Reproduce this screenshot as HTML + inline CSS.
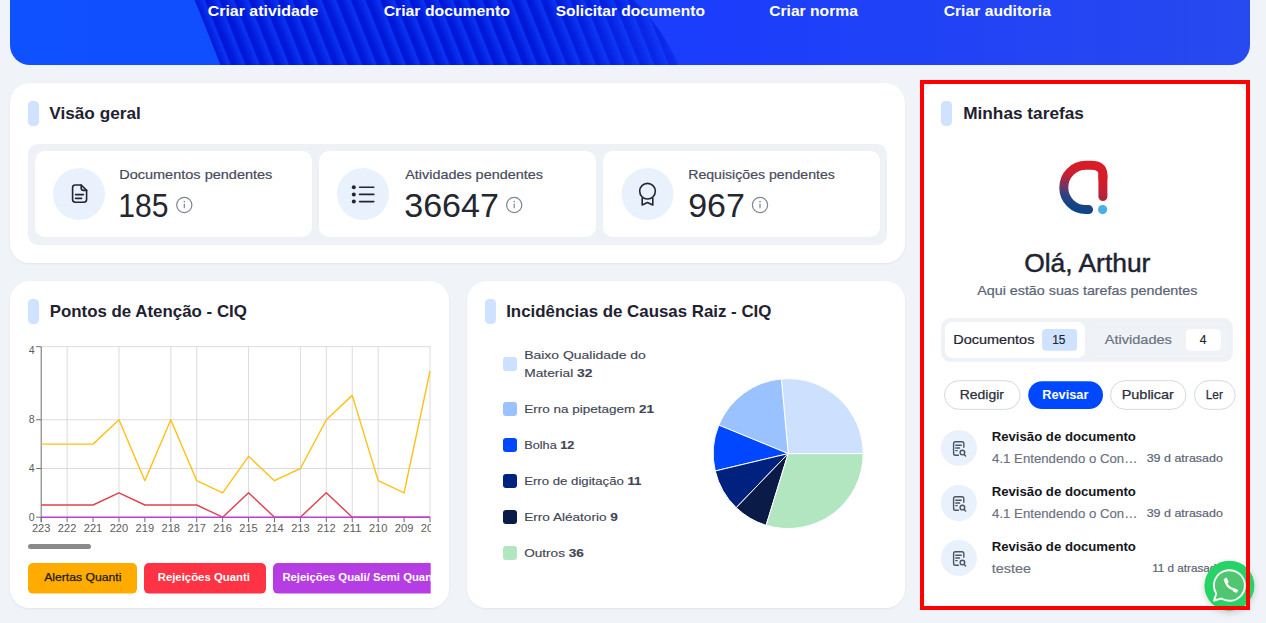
<!DOCTYPE html><html><head><meta charset="utf-8"><style>html,body{margin:0;padding:0;background:#f0f3f7;overflow:hidden}svg{display:block;font-family:"Liberation Sans",sans-serif}</style></head><body><svg width="1266" height="623" viewBox="0 0 1266 623"><defs><linearGradient id="banG" x1="10" y1="0" x2="1250" y2="0" gradientUnits="userSpaceOnUse"><stop offset="0" stop-color="#0f50ff"/><stop offset="0.15" stop-color="#0f4ffe"/><stop offset="0.55" stop-color="#1b3dfc"/><stop offset="0.8" stop-color="#2244f4"/><stop offset="1" stop-color="#2749f0"/></linearGradient><clipPath id="banClip"><rect x="10" y="-40" width="1240" height="105" rx="20"/></clipPath><clipPath id="stripeClip"><path d="M194,-2 L221,66 L679,66 C668,40 650,15 632,-2 Z"/></clipPath><pattern id="stripes" patternUnits="userSpaceOnUse" width="14.6" height="200" patternTransform="skewX(21.8)"><rect x="0" y="0" width="14.6" height="200" fill="url(#stripeG)"/></pattern><linearGradient id="stripeG" x1="0" y1="0" x2="1" y2="0"><stop offset="0" stop-color="#0a33f2"/><stop offset="0.06" stop-color="#0016d4"/><stop offset="0.35" stop-color="#0019d8"/><stop offset="1" stop-color="#0b36f4"/></linearGradient><linearGradient id="fadeG" x1="150" y1="0" x2="690" y2="0" gradientUnits="userSpaceOnUse"><stop offset="0" stop-color="#fff"/><stop offset="0.7" stop-color="#fff"/><stop offset="1" stop-color="#777"/></linearGradient><mask id="fadeM" maskUnits="userSpaceOnUse" x="0" y="-40" width="1266" height="110"><rect x="0" y="-40" width="1266" height="110" fill="url(#fadeG)"/></mask><clipPath id="bt3clip"><rect x="273" y="560" width="157.7" height="40"/></clipPath><clipPath id="chartClip"><rect x="20" y="330" width="411" height="215"/></clipPath><linearGradient id="logoG" x1="1085" y1="165" x2="1075" y2="208" gradientUnits="userSpaceOnUse"><stop offset="0" stop-color="#d81c28"/><stop offset="0.28" stop-color="#c92031"/><stop offset="0.45" stop-color="#9c2a4a"/><stop offset="0.6" stop-color="#6a3768"/><stop offset="0.76" stop-color="#2e4280"/><stop offset="1" stop-color="#0e4488"/></linearGradient><linearGradient id="logoR" x1="0" y1="174" x2="0" y2="201" gradientUnits="userSpaceOnUse"><stop offset="0" stop-color="#d81c28"/><stop offset="0.55" stop-color="#c82033"/><stop offset="1" stop-color="#a4283f"/></linearGradient><filter id="sh" x="-10%" y="-10%" width="120%" height="120%"><feDropShadow dx="0" dy="1" stdDeviation="1.2" flood-color="#000" flood-opacity="0.06"/></filter><filter id="wsh" x="-50%" y="-50%" width="200%" height="200%"><feDropShadow dx="0" dy="2" stdDeviation="3" flood-color="#000" flood-opacity="0.18"/></filter></defs><rect x="0" y="0" width="1266" height="623" fill="#f0f3f7"/><g clip-path="url(#banClip)"><rect x="0" y="-40" width="1266" height="105" fill="url(#banG)"/><g clip-path="url(#stripeClip)"><rect x="150" y="-5" width="600" height="75" fill="url(#stripes)" mask="url(#fadeM)"/></g></g><rect x="10" y="83" width="895" height="180" rx="20" fill="#fff" filter="url(#sh)"/><rect x="10" y="281" width="439" height="327" rx="20" fill="#fff" filter="url(#sh)"/><rect x="467" y="281" width="438" height="327" rx="20" fill="#fff" filter="url(#sh)"/><rect x="922" y="82" width="326" height="526" rx="20" fill="#fff"/><rect x="28" y="101" width="11" height="25" rx="4.5" fill="#cfe2ff"/><rect x="941" y="101" width="11" height="25" rx="4.5" fill="#cfe2ff"/><rect x="28" y="299" width="11" height="25" rx="4.5" fill="#cfe2ff"/><rect x="485" y="299" width="11" height="25" rx="4.5" fill="#cfe2ff"/><rect x="28" y="144" width="859" height="101" rx="10" fill="#eef2f6"/><rect x="35" y="151" width="277" height="86" rx="10" fill="#fff"/><rect x="319" y="151" width="277" height="86" rx="10" fill="#fff"/><rect x="603" y="151" width="277" height="86" rx="10" fill="#fff"/><circle cx="79" cy="194" r="26" fill="#e9f1fd"/><circle cx="363" cy="194" r="26" fill="#e9f1fd"/><circle cx="647.5" cy="194" r="26" fill="#e9f1fd"/><g fill="none" stroke="#23262f" stroke-width="1.6" stroke-linecap="round" stroke-linejoin="round"><path d="M81.2,185 H75.2 Q72.6,185 72.6,187.6 V199.6 Q72.6,202.2 75.2,202.2 H84 Q86.6,202.2 86.6,199.6 V190.4 Z"/><path d="M81.2,185 V188 Q81.2,190.4 83.6,190.4 H86.6"/><path d="M75.6,194.6 H83.4 M75.6,198.4 H81.6"/></g><g fill="#23262f"><circle cx="353.8" cy="187.2" r="2"/><circle cx="353.8" cy="194.4" r="2"/><circle cx="353.8" cy="201.6" r="2"/></g><g stroke="#23262f" stroke-width="1.6" stroke-linecap="round"><path d="M359.6,187.2 H373.8 M359.6,194.4 H373.8 M359.6,201.6 H373.8"/></g><g fill="none" stroke="#23262f" stroke-width="1.6" stroke-linejoin="round"><circle cx="647.5" cy="191.2" r="7.8"/><path d="M642.2,197.5 V205 L647.5,202.6 L652.8,205 V197.5"/></g><g stroke="#7d8592" fill="none" stroke-width="1.2"><circle cx="184.3" cy="205" r="7.6"/></g><rect x="183.70" y="203.6" width="1.2" height="4.6" fill="#7d8592"/><circle cx="184.3" cy="201.6" r="0.8" fill="#7d8592"/><g stroke="#7d8592" fill="none" stroke-width="1.2"><circle cx="514.2" cy="205" r="7.6"/></g><rect x="513.60" y="203.6" width="1.2" height="4.6" fill="#7d8592"/><circle cx="514.2" cy="201.6" r="0.8" fill="#7d8592"/><g stroke="#7d8592" fill="none" stroke-width="1.2"><circle cx="760.0" cy="205" r="7.6"/></g><rect x="759.40" y="203.6" width="1.2" height="4.6" fill="#7d8592"/><circle cx="760.0" cy="201.6" r="0.8" fill="#7d8592"/><g stroke="#dcdcdc" stroke-width="1"><line x1="41.2" y1="346.68" x2="430.5" y2="346.68"/><line x1="41.2" y1="419.76" x2="430.5" y2="419.76"/><line x1="41.2" y1="468.48" x2="430.5" y2="468.48"/><line x1="67.12" y1="346.68" x2="67.12" y2="517.20"/><line x1="118.96" y1="346.68" x2="118.96" y2="517.20"/><line x1="170.80" y1="346.68" x2="170.80" y2="517.20"/><line x1="196.72" y1="346.68" x2="196.72" y2="517.20"/><line x1="248.56" y1="346.68" x2="248.56" y2="517.20"/><line x1="300.40" y1="346.68" x2="300.40" y2="517.20"/><line x1="326.32" y1="346.68" x2="326.32" y2="517.20"/><line x1="352.24" y1="346.68" x2="352.24" y2="517.20"/><line x1="378.16" y1="346.68" x2="378.16" y2="517.20"/><line x1="430.00" y1="346.68" x2="430.00" y2="517.20"/></g><g stroke="#6e6e6e" stroke-width="1"><line x1="41.2" y1="346.68" x2="41.2" y2="522.20"/><line x1="36.2" y1="346.68" x2="41.2" y2="346.68"/><line x1="36.2" y1="419.76" x2="41.2" y2="419.76"/><line x1="36.2" y1="468.48" x2="41.2" y2="468.48"/><line x1="36.2" y1="517.20" x2="41.2" y2="517.20"/><line x1="41.20" y1="517.2" x2="41.20" y2="522.2"/><line x1="67.12" y1="517.2" x2="67.12" y2="522.2"/><line x1="93.04" y1="517.2" x2="93.04" y2="522.2"/><line x1="118.96" y1="517.2" x2="118.96" y2="522.2"/><line x1="144.88" y1="517.2" x2="144.88" y2="522.2"/><line x1="170.80" y1="517.2" x2="170.80" y2="522.2"/><line x1="196.72" y1="517.2" x2="196.72" y2="522.2"/><line x1="222.64" y1="517.2" x2="222.64" y2="522.2"/><line x1="248.56" y1="517.2" x2="248.56" y2="522.2"/><line x1="274.48" y1="517.2" x2="274.48" y2="522.2"/><line x1="300.40" y1="517.2" x2="300.40" y2="522.2"/><line x1="326.32" y1="517.2" x2="326.32" y2="522.2"/><line x1="352.24" y1="517.2" x2="352.24" y2="522.2"/><line x1="378.16" y1="517.2" x2="378.16" y2="522.2"/><line x1="404.08" y1="517.2" x2="404.08" y2="522.2"/><line x1="430.00" y1="517.2" x2="430.00" y2="522.2"/></g><polyline points="41.20,444.12 67.12,444.12 93.04,444.12 118.96,419.76 144.88,480.66 170.80,419.76 196.72,480.66 222.64,492.84 248.56,456.30 274.48,480.66 300.40,468.48 326.32,419.76 352.24,395.40 378.16,480.66 404.08,492.84 430.00,371.04" fill="none" stroke="#fcc21b" stroke-width="1.45" stroke-linejoin="round"/><polyline points="41.20,505.02 67.12,505.02 93.04,505.02 118.96,492.84 144.88,505.02 170.80,505.02 196.72,505.02 222.64,517.20 248.56,492.84 274.48,517.20 300.40,517.20 326.32,492.84 352.24,517.20 378.16,517.20 404.08,517.20 430.00,517.20" fill="none" stroke="#e0434f" stroke-width="1.45" stroke-linejoin="round"/><polyline points="41.20,517.20 67.12,517.20 93.04,517.20 118.96,517.20 144.88,517.20 170.80,517.20 196.72,517.20 222.64,517.20 248.56,517.20 274.48,517.20 300.40,517.20 326.32,517.20 352.24,517.20 378.16,517.20 404.08,517.20 430.00,517.20" fill="none" stroke="#b83ee0" stroke-width="1.5"/><g font-family="Liberation Sans" font-size="10.6" fill="#5c5c5c"><text x="34.6" y="353.6" text-anchor="end">4</text><text x="34.6" y="423.4" text-anchor="end">8</text><text x="34.6" y="472.3" text-anchor="end">4</text><text x="34.6" y="520.8" text-anchor="end">0</text></g><g font-family="Liberation Sans" font-size="10.6" fill="#5c5c5c" clip-path="url(#chartClip)"><text x="41.20" y="531.9" text-anchor="middle" textLength="18.5" lengthAdjust="spacingAndGlyphs">223</text><text x="67.12" y="531.9" text-anchor="middle" textLength="18.5" lengthAdjust="spacingAndGlyphs">222</text><text x="93.04" y="531.9" text-anchor="middle" textLength="18.5" lengthAdjust="spacingAndGlyphs">221</text><text x="118.96" y="531.9" text-anchor="middle" textLength="18.5" lengthAdjust="spacingAndGlyphs">220</text><text x="144.88" y="531.9" text-anchor="middle" textLength="18.5" lengthAdjust="spacingAndGlyphs">219</text><text x="170.80" y="531.9" text-anchor="middle" textLength="18.5" lengthAdjust="spacingAndGlyphs">218</text><text x="196.72" y="531.9" text-anchor="middle" textLength="18.5" lengthAdjust="spacingAndGlyphs">217</text><text x="222.64" y="531.9" text-anchor="middle" textLength="18.5" lengthAdjust="spacingAndGlyphs">216</text><text x="248.56" y="531.9" text-anchor="middle" textLength="18.5" lengthAdjust="spacingAndGlyphs">215</text><text x="274.48" y="531.9" text-anchor="middle" textLength="18.5" lengthAdjust="spacingAndGlyphs">214</text><text x="300.40" y="531.9" text-anchor="middle" textLength="18.5" lengthAdjust="spacingAndGlyphs">213</text><text x="326.32" y="531.9" text-anchor="middle" textLength="18.5" lengthAdjust="spacingAndGlyphs">212</text><text x="352.24" y="531.9" text-anchor="middle" textLength="18.5" lengthAdjust="spacingAndGlyphs">211</text><text x="378.16" y="531.9" text-anchor="middle" textLength="18.5" lengthAdjust="spacingAndGlyphs">210</text><text x="404.08" y="531.9" text-anchor="middle" textLength="18.5" lengthAdjust="spacingAndGlyphs">209</text><text x="430.00" y="531.9" text-anchor="middle" textLength="18.5" lengthAdjust="spacingAndGlyphs">208</text></g><rect x="28" y="544" width="63" height="5" rx="2.5" fill="#8a8a8a"/><rect x="28" y="563" width="109" height="30.6" rx="5" fill="#ffab00"/><rect x="144" y="563" width="122" height="30.6" rx="5" fill="#ff3344"/><g clip-path="url(#bt3clip)"><rect x="273" y="563" width="200" height="30.6" rx="5" fill="#b63de3"/></g><path d="M788.2,453.6 L863.20,453.60 A75.0,75.0 0 0 0 781.39,378.91 Z" fill="#cde1ff" stroke="#fff" stroke-width="1" stroke-linejoin="round"/><path d="M788.2,453.6 L781.39,378.91 A75.0,75.0 0 0 0 718.82,425.12 Z" fill="#99c2ff" stroke="#fff" stroke-width="1" stroke-linejoin="round"/><path d="M788.2,453.6 L718.82,425.12 A75.0,75.0 0 0 0 715.24,470.97 Z" fill="#0047ff" stroke="#fff" stroke-width="1" stroke-linejoin="round"/><path d="M788.2,453.6 L715.24,470.97 A75.0,75.0 0 0 0 736.21,507.66 Z" fill="#00227f" stroke="#fff" stroke-width="1" stroke-linejoin="round"/><path d="M788.2,453.6 L736.21,507.66 A75.0,75.0 0 0 0 766.14,525.28 Z" fill="#0a1b48" stroke="#fff" stroke-width="1" stroke-linejoin="round"/><path d="M788.2,453.6 L766.14,525.28 A75.0,75.0 0 0 0 863.20,453.60 Z" fill="#b2e6c1" stroke="#fff" stroke-width="1" stroke-linejoin="round"/><rect x="503" y="357" width="14" height="14" rx="3" fill="#cde1ff"/><rect x="503" y="402" width="14" height="14" rx="3" fill="#99c2ff"/><rect x="503" y="438" width="14" height="14" rx="3" fill="#0047ff"/><rect x="503" y="474" width="14" height="14" rx="3" fill="#00227f"/><rect x="503" y="510" width="14" height="14" rx="3" fill="#0a1b48"/><rect x="503" y="546" width="14" height="14" rx="3" fill="#b2e6c1"/><path d="M1102.9,178 V174.5 Q1102.9,165.3 1091,165.3 H1086 C1073.5,165.3 1063.8,175.3 1063.8,187.5 C1063.8,199.6 1073.5,209.6 1086,209.6 H1088.6" fill="none" stroke="url(#logoG)" stroke-width="9" stroke-linecap="round"/><path d="M1102.9,196.5 V176" fill="none" stroke="url(#logoR)" stroke-width="9" stroke-linecap="round"/><circle cx="1102.6" cy="209.6" r="4.6" fill="#4aaee8"/><rect x="941.2" y="318" width="291.6" height="43.8" rx="9" fill="#eef1f5"/><rect x="945" y="321.9" width="140" height="36" rx="7" fill="#fff"/><rect x="1042.1" y="329" width="35" height="21.8" rx="4" fill="#cfe2ff"/><rect x="1091" y="323" width="136" height="35.6" rx="7" fill="#e9edf2"/><rect x="1089" y="322" width="140" height="35.8" rx="7" fill="#eff2f6"/><rect x="1186" y="329.2" width="34.8" height="21.5" rx="4" fill="#fff"/><rect x="944.5" y="380.7" width="75.60" height="28.6" rx="14.3" fill="#fff" stroke="#d3dae3" stroke-width="1"/><rect x="1028.2" y="381.2" width="74.80" height="27.8" rx="13.9" fill="#0048ff"/><rect x="1110.6" y="380.7" width="75.30" height="28.6" rx="14.3" fill="#fff" stroke="#d3dae3" stroke-width="1"/><rect x="1194.5" y="380.7" width="40.70" height="28.6" rx="14.3" fill="#fff" stroke="#d3dae3" stroke-width="1"/><circle cx="958.9" cy="448" r="18" fill="#e9f1fd"/><g transform="translate(0,0)" fill="none" stroke="#4b5563" stroke-width="1.4" stroke-linecap="round" stroke-linejoin="round"><path d="M958.4,455.3 H955.4 Q953.6,455.3 953.6,453.5 V443.6 Q953.6,441.8 955.4,441.8 H962 Q963.8,441.8 963.8,443.6 V447.3"/><path d="M955.8,445.3 H961.3 M955.8,448 H959.6 M955.8,450.6 H957.2"/><circle cx="962.4" cy="452.6" r="2.3"/><path d="M964.1,454.4 L965.6,455.9"/></g><circle cx="958.9" cy="503" r="18" fill="#e9f1fd"/><g transform="translate(0,55)" fill="none" stroke="#4b5563" stroke-width="1.4" stroke-linecap="round" stroke-linejoin="round"><path d="M958.4,455.3 H955.4 Q953.6,455.3 953.6,453.5 V443.6 Q953.6,441.8 955.4,441.8 H962 Q963.8,441.8 963.8,443.6 V447.3"/><path d="M955.8,445.3 H961.3 M955.8,448 H959.6 M955.8,450.6 H957.2"/><circle cx="962.4" cy="452.6" r="2.3"/><path d="M964.1,454.4 L965.6,455.9"/></g><circle cx="958.9" cy="558" r="18" fill="#e9f1fd"/><g transform="translate(0,110)" fill="none" stroke="#4b5563" stroke-width="1.4" stroke-linecap="round" stroke-linejoin="round"><path d="M958.4,455.3 H955.4 Q953.6,455.3 953.6,453.5 V443.6 Q953.6,441.8 955.4,441.8 H962 Q963.8,441.8 963.8,443.6 V447.3"/><path d="M955.8,445.3 H961.3 M955.8,448 H959.6 M955.8,450.6 H957.2"/><circle cx="962.4" cy="452.6" r="2.3"/><path d="M964.1,454.4 L965.6,455.9"/></g><g font-family="Liberation Sans"><text id="ban0" x="207.70" y="15.90" font-size="14.6" fill="#ffffff" font-weight="bold" textLength="110.70" lengthAdjust="spacingAndGlyphs">Criar atividade</text><text id="ban1" x="383.70" y="15.90" font-size="14.6" fill="#ffffff" font-weight="bold" textLength="126.20" lengthAdjust="spacingAndGlyphs">Criar documento</text><text id="ban2" x="555.70" y="15.90" font-size="14.6" fill="#ffffff" font-weight="bold" textLength="149.20" lengthAdjust="spacingAndGlyphs">Solicitar documento</text><text id="ban3" x="769.20" y="15.90" font-size="14.6" fill="#ffffff" font-weight="bold" textLength="88.70" lengthAdjust="spacingAndGlyphs">Criar norma</text><text id="ban4" x="943.70" y="15.90" font-size="14.6" fill="#ffffff" font-weight="bold" textLength="107.20" lengthAdjust="spacingAndGlyphs">Criar auditoria</text><text id="t1" x="49.20" y="119.10" font-size="16.4" fill="#1f2230" font-weight="bold" textLength="91.70" lengthAdjust="spacingAndGlyphs">Visão geral</text><text id="t2" x="963.20" y="118.90" font-size="16.4" fill="#1f2230" font-weight="bold" textLength="120.70" lengthAdjust="spacingAndGlyphs">Minhas tarefas</text><text id="t3" x="49.70" y="317.30" font-size="16.4" fill="#1f2230" font-weight="bold" textLength="197.20" lengthAdjust="spacingAndGlyphs">Pontos de Atenção - CIQ</text><text id="t4" x="506.20" y="317.30" font-size="16.4" fill="#1f2230" font-weight="bold" textLength="265.20" lengthAdjust="spacingAndGlyphs">Incidências de Causas Raiz - CIQ</text><text id="l1" x="119.20" y="179.10" font-size="13.4" fill="#474c5a" stroke="#474c5a" stroke-width="0.2" textLength="153.20" lengthAdjust="spacingAndGlyphs">Documentos pendentes</text><text id="l2" x="405.20" y="179.10" font-size="13.4" fill="#474c5a" stroke="#474c5a" stroke-width="0.2" textLength="137.70" lengthAdjust="spacingAndGlyphs">Atividades pendentes</text><text id="l3" x="688.20" y="179.10" font-size="13.4" fill="#474c5a" stroke="#474c5a" stroke-width="0.2" textLength="146.70" lengthAdjust="spacingAndGlyphs">Requisições pendentes</text><text id="n1" x="118.20" y="217.20" font-size="34" fill="#25272f" textLength="50.20" lengthAdjust="spacingAndGlyphs">185</text><text id="n2" x="404.20" y="216.80" font-size="34" fill="#25272f" textLength="94.70" lengthAdjust="spacingAndGlyphs">36647</text><text id="n3" x="688.20" y="217.00" font-size="34" fill="#25272f" textLength="56.70" lengthAdjust="spacingAndGlyphs">967</text><text id="ola" x="1024.20" y="272.00" font-size="25.5" fill="#1e2330" stroke="#1e2330" stroke-width="0.45" textLength="126.20" lengthAdjust="spacingAndGlyphs">Olá, Arthur</text><text id="aqui" x="977.20" y="294.90" font-size="13.4" fill="#5b6475" stroke="#5b6475" stroke-width="0.22" textLength="220.20" lengthAdjust="spacingAndGlyphs">Aqui estão suas tarefas pendentes</text><text id="tab1" x="953.20" y="343.80" font-size="13.0" fill="#1f2433" stroke="#1f2433" stroke-width="0.2" textLength="81.20" lengthAdjust="spacingAndGlyphs">Documentos</text><text id="b15" x="1052.20" y="343.80" font-size="13.0" fill="#1f2433" stroke="#1f2433" stroke-width="0.2" textLength="13.20" lengthAdjust="spacingAndGlyphs">15</text><text id="tab2" x="1104.70" y="343.80" font-size="13.0" fill="#6b7280" stroke="#6b7280" stroke-width="0.2" textLength="67.20" lengthAdjust="spacingAndGlyphs">Atividades</text><text id="b4" x="1199.70" y="343.80" font-size="13.0" fill="#1f2433" stroke="#1f2433" stroke-width="0.2" textLength="6.70" lengthAdjust="spacingAndGlyphs">4</text><text id="p1" x="959.70" y="399.40" font-size="13.4" fill="#2a2f3a" stroke="#2a2f3a" stroke-width="0.25" textLength="44.20" lengthAdjust="spacingAndGlyphs">Redigir</text><text id="p2" x="1042.20" y="399.40" font-size="13.4" fill="#ffffff" font-weight="bold" textLength="46.20" lengthAdjust="spacingAndGlyphs">Revisar</text><text id="p3" x="1121.70" y="399.40" font-size="13.4" fill="#2a2f3a" stroke="#2a2f3a" stroke-width="0.25" textLength="52.20" lengthAdjust="spacingAndGlyphs">Publicar</text><text id="p4" x="1205.70" y="399.40" font-size="13.4" fill="#2a2f3a" stroke="#2a2f3a" stroke-width="0.25" textLength="17.20" lengthAdjust="spacingAndGlyphs">Ler</text><text id="tt0" x="991.70" y="441.10" font-size="13.0" fill="#15171c" font-weight="bold" textLength="144.20" lengthAdjust="spacingAndGlyphs">Revisão de documento</text><text id="tt1" x="991.70" y="496.10" font-size="13.0" fill="#15171c" font-weight="bold" textLength="144.20" lengthAdjust="spacingAndGlyphs">Revisão de documento</text><text id="tt2" x="991.70" y="551.10" font-size="13.0" fill="#15171c" font-weight="bold" textLength="144.20" lengthAdjust="spacingAndGlyphs">Revisão de documento</text><text id="ts0" x="992.10" y="462.90" font-size="13.6" fill="#6b7280" stroke="#6b7280" stroke-width="0.18" textLength="145.30" lengthAdjust="spacingAndGlyphs">4.1 Entendendo o Con…</text><text id="ts1" x="992.10" y="517.90" font-size="13.6" fill="#6b7280" stroke="#6b7280" stroke-width="0.18" textLength="145.30" lengthAdjust="spacingAndGlyphs">4.1 Entendendo o Con…</text><text id="ts2" x="991.70" y="572.90" font-size="13.6" fill="#6b7280" stroke="#6b7280" stroke-width="0.18" textLength="39.20" lengthAdjust="spacingAndGlyphs">testee</text><text id="td0" x="1146.70" y="462.20" font-size="11.4" fill="#5a6272" stroke="#5a6272" stroke-width="0.18" textLength="76.20" lengthAdjust="spacingAndGlyphs">39 d atrasado</text><text id="td1" x="1146.70" y="517.20" font-size="11.4" fill="#5a6272" stroke="#5a6272" stroke-width="0.18" textLength="76.20" lengthAdjust="spacingAndGlyphs">39 d atrasado</text><text id="td2" x="1152.20" y="572.20" font-size="11.4" fill="#5a6272" stroke="#5a6272" stroke-width="0.18" textLength="70.70" lengthAdjust="spacingAndGlyphs">11 d atrasado</text><text id="lg0" x="524.20" y="358.80" font-size="11.4" fill="#3f4654" stroke="#3f4654" stroke-width="0.15" textLength="121.70" lengthAdjust="spacingAndGlyphs">Baixo Qualidade do</text><text id="lg1" x="524.20" y="376.50" font-size="11.4" fill="#3f4654" stroke="#3f4654" stroke-width="0.15" textLength="68.20" lengthAdjust="spacingAndGlyphs"><tspan font-weight="normal">Material </tspan><tspan font-weight="bold">32</tspan></text><text id="lg2" x="524.20" y="412.50" font-size="11.4" fill="#3f4654" stroke="#3f4654" stroke-width="0.15" textLength="129.70" lengthAdjust="spacingAndGlyphs"><tspan font-weight="normal">Erro na pipetagem </tspan><tspan font-weight="bold">21</tspan></text><text id="lg3" x="524.20" y="449.10" font-size="11.4" fill="#3f4654" stroke="#3f4654" stroke-width="0.15" textLength="50.20" lengthAdjust="spacingAndGlyphs"><tspan font-weight="normal">Bolha </tspan><tspan font-weight="bold">12</tspan></text><text id="lg4" x="524.20" y="485.20" font-size="11.4" fill="#3f4654" stroke="#3f4654" stroke-width="0.15" textLength="117.20" lengthAdjust="spacingAndGlyphs"><tspan font-weight="normal">Erro de digitação </tspan><tspan font-weight="bold">11</tspan></text><text id="lg5" x="524.20" y="521.00" font-size="11.4" fill="#3f4654" stroke="#3f4654" stroke-width="0.15" textLength="93.70" lengthAdjust="spacingAndGlyphs"><tspan font-weight="normal">Erro Aléatorio </tspan><tspan font-weight="bold">9</tspan></text><text id="lg6" x="524.20" y="556.70" font-size="11.4" fill="#3f4654" stroke="#3f4654" stroke-width="0.15" textLength="59.70" lengthAdjust="spacingAndGlyphs"><tspan font-weight="normal">Outros </tspan><tspan font-weight="bold">36</tspan></text><text id="bt1" x="44.20" y="581.20" font-size="11.6" fill="#1a1a1a" stroke="#1a1a1a" stroke-width="0.25" textLength="77.20" lengthAdjust="spacingAndGlyphs">Alertas Quanti</text><text id="bt2" x="157.70" y="581.20" font-size="11.6" fill="#ffffff" font-weight="bold" textLength="92.20" lengthAdjust="spacingAndGlyphs">Rejeições Quanti</text><text id="bt3" x="282.40" y="581.20" font-size="11.6" fill="#ffffff" font-weight="bold" textLength="156.57" lengthAdjust="spacingAndGlyphs" clip-path="url(#bt3clip)">Rejeições Quali/ Semi Quanti</text></g><g filter="url(#wsh)"><circle cx="1229.4" cy="585.7" r="25" fill="#25d366"/></g><path d="M1229.4,570.2 C1220.6,570.2 1213.9,577 1213.9,585.6 C1213.9,588.6 1214.7,591.3 1216.2,593.7 L1214,600.6 L1221.2,598.5 C1223.5,599.9 1226.3,600.8 1229.4,600.8 C1238,600.8 1244.9,594 1244.9,585.5 C1244.9,577 1238,570.2 1229.4,570.2 Z" fill="#4fc66f" stroke="#fff" stroke-width="1.9" stroke-linejoin="round"/><path d="M1225.4,580.2 C1225.4,583.4 1228.6,588.6 1234.4,589.6" fill="none" stroke="#fff" stroke-width="2.2" stroke-linecap="round"/><path d="M1224.3,579.6 L1226.4,578.2 L1227.9,582 L1226.6,583.6 Z M1233.2,590.6 L1234.8,589 L1237.6,590.6 L1236.3,592.2 Z" fill="#fff" stroke="#fff" stroke-width="1.2" stroke-linejoin="round"/><rect x="922" y="82" width="326" height="526" fill="none" stroke="#ff0000" stroke-width="4"/></svg></body></html>
